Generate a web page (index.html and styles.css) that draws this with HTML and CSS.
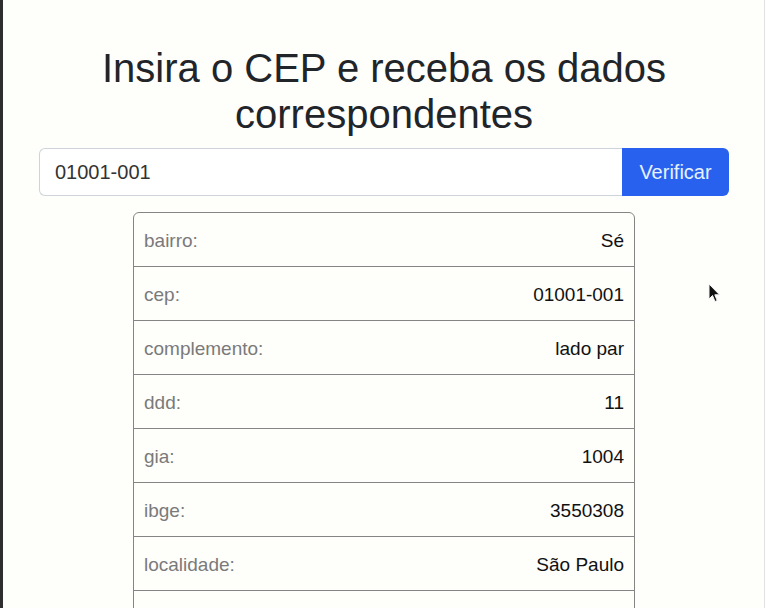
FILE: index.html
```html
<!DOCTYPE html>
<html lang="pt-BR">
<head>
<meta charset="utf-8">
<title>CEP</title>
<link rel="stylesheet" href="styles.css">
</head>
<body>
<div class="frame">
  <main class="page">
    <h1 class="title">Insira o CEP e receba os dados correspondentes</h1>
    <form class="search">
      <input class="search-input" type="text" value="01001-001">
      <button class="search-btn" type="button">Verificar</button>
    </form>
    <ul class="result">
      <li class="row"><span class="key">bairro:</span><span class="val">Sé</span></li>
      <li class="row"><span class="key">cep:</span><span class="val">01001-001</span></li>
      <li class="row"><span class="key">complemento:</span><span class="val">lado par</span></li>
      <li class="row"><span class="key">ddd:</span><span class="val">11</span></li>
      <li class="row"><span class="key">gia:</span><span class="val">1004</span></li>
      <li class="row"><span class="key">ibge:</span><span class="val">3550308</span></li>
      <li class="row"><span class="key">localidade:</span><span class="val">São Paulo</span></li>
      <li class="row"><span class="key">logradouro:</span><span class="val">Praça da Sé</span></li>
    </ul>
  </main>
  <svg class="cursor" width="14" height="22" viewBox="0 0 14 22"><path d="M1 1 L1 16 L4.5 12.5 L7 18.5 L9.2 17.6 L6.8 11.8 L11.5 11.8 Z" fill="#111" stroke="#f4f4f4" stroke-width="1"/></svg>
</div>
</body>
</html>
```

FILE: styles.css
```css
html, body {
  margin: 0;
  padding: 0;
  background: #fefefb;
}
body {
  font-family: "Liberation Sans", Arial, sans-serif;
  color: #212529;
}
.frame {
  position: relative;
  box-sizing: border-box;
  width: 765px;
  height: 608px;
  border-left: 3px solid #2e2e2e;
  border-right: 1px solid #e2e2e2;
  overflow: hidden;
}
.page {
  padding: 45px 35px 0 36px;
}
.title {
  margin: 0 0 11px;
  font-size: 40px;
  font-weight: 400;
  line-height: 46px;
  text-align: center;
  color: #212529;
}
.search {
  display: flex;
  margin: 0 0 16px;
}
.search-input {
  flex: 1;
  box-sizing: border-box;
  height: 48px;
  margin: 0;
  padding: 0 15px;
  font-family: inherit;
  font-size: 20px;
  color: #333;
  background: #fff;
  border: 1px solid #ced4da;
  border-right: none;
  border-radius: 6px 0 0 6px;
  outline: none;
}
.search-btn {
  box-sizing: border-box;
  width: 107px;
  height: 48px;
  margin: 0;
  padding: 0;
  font-family: inherit;
  font-size: 20px;
  color: #e6f1ff;
  background: #2961ef;
  border: none;
  border-radius: 0 6px 6px 0;
}
.result {
  list-style: none;
  width: 502px;
  margin: 0 auto;
  padding: 0;
  box-sizing: border-box;
  border: 1px solid #858585;
  border-radius: 6px 6px 0 0;
}
.row {
  box-sizing: border-box;
  display: flex;
  justify-content: space-between;
  align-items: center;
  height: 54px;
  padding: 3px 10px 0;
  font-size: 19px;
  border-top: 1px solid #858585;
}
.row:first-child {
  height: 53px;
  border-top: none;
}
.key {
  color: #7a7a7a;
}
.val {
  color: #111;
}
.cursor {
  position: absolute;
  left: 705px;
  top: 283px;
}
```
